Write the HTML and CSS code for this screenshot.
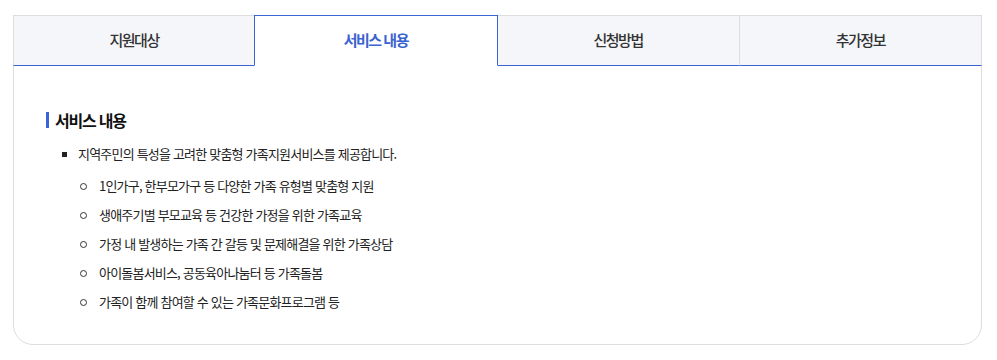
FILE: index.html
```html
<!DOCTYPE html>
<html lang="ko">
<head>
  <meta charset="UTF-8">
  <title>서비스 내용</title>
  <link rel="stylesheet" href="styles.css">
</head>
<body>
  <div class="panel">
    <ul class="tabs">
      <li class="tab">지원대상</li>
      <li class="tab active">서비스 내용</li>
      <li class="tab">신청방법</li>
      <li class="tab">추가정보</li>
    </ul>

    <div class="content">
      <h3 class="title">서비스 내용</h3>
      <ul class="list">
        <li>
          지역주민의 특성을 고려한 맞춤형 가족지원서비스를 제공합니다.
          <ul class="sub">
            <li>1인가구, 한부모가구 등 다양한 가족 유형별 맞춤형 지원</li>
            <li>생애주기별 부모교육 등 건강한 가정을 위한 가족교육</li>
            <li>가정 내 발생하는 가족 간 갈등 및 문제해결을 위한 가족상담</li>
            <li>아이돌봄서비스, 공동육아나눔터 등 가족돌봄</li>
            <li>가족이 함께 참여할 수 있는 가족문화프로그램 등</li>
          </ul>
        </li>
      </ul>
    </div>
  </div>
</body>
</html>
```

FILE: styles.css
```css
* {
  box-sizing: border-box;
  margin: 0;
  padding: 0;
}
body {
  background: #fff;
  color: #222;
  font-family: "Noto Sans CJK KR", "Noto Sans", sans-serif;
  padding: 15px 15px 0 13px;
}
ul {
  list-style: none;
}
.panel {
  width: 969px;
  border: 1px solid #ddd;
  border-radius: 0 0 20px 20px;
}
.tabs {
  display: grid;
  grid-template-columns: repeat(4, 1fr);
  margin: -1px -1px 0;
}
.tab {
  height: 51px;
  display: flex;
  align-items: center;
  justify-content: center;
  background: #f5f6fa;
  border: 1px solid #ddd;
  border-bottom-color: #3b63d1;
  font-size: 15px;
  font-weight: 500;
  letter-spacing: -1.5px;
  color: #333;
  padding-bottom: 2px;
}
.tab + .tab {
  margin-left: -1px;
}
.tab.active {
  position: relative;
  z-index: 1;
  background: #fff;
  border-color: #3b63d1;
  border-bottom-color: #fff;
  color: #3b63d1;
  font-weight: bold;
}
.content {
  padding: 42px 32px 28px;
}
.title {
  display: flex;
  align-items: center;
  gap: 6px;
  font-size: 16px;
  letter-spacing: -1.2px;
  line-height: 24px;
  color: #111;
}
.title::before {
  content: "";
  width: 3px;
  height: 16px;
  background: #3b63d9;
}
.list {
  margin-top: 12px;
  padding-left: 16px;
  font-size: 13px;
  letter-spacing: -0.8px;
  line-height: 20px;
}
.list > li {
  position: relative;
  padding-left: 16px;
}
.list > li::before {
  content: "";
  position: absolute;
  left: 0;
  top: 8px;
  width: 5px;
  height: 5px;
  background: #222;
}
.sub {
  margin-top: 7px;
  padding-left: 2px;
}
.sub li {
  position: relative;
  padding-left: 19px;
  line-height: 29px;
}
.sub li::before {
  content: "";
  position: absolute;
  left: 0;
  top: 12px;
  width: 5px;
  height: 5px;
  border: 1px solid #333;
  border-radius: 50%;
}
```
